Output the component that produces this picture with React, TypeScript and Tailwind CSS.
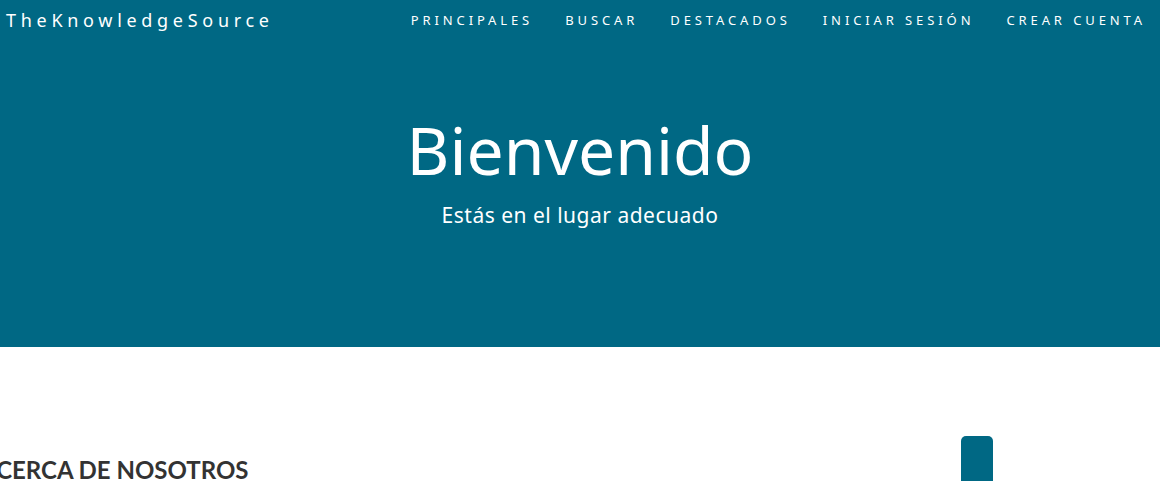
import React from "react";

const links = ["Principales", "Buscar", "Destacados", "Iniciar sesión", "Crear cuenta"];

export default function App() {
  return (
    <div className="min-h-screen bg-white overflow-hidden" style={{ fontFamily: "'Noto Sans', sans-serif" }}>
      <header className="bg-[#006884] h-[347px] flex flex-col">
        <nav className="flex items-center justify-between h-[41px] pl-[6px] pr-[14px]">
          <a className="text-white text-[18px] tracking-[4.7px]">TheKnowledgeSource</a>
          <ul className="flex gap-[32px]">
            {links.map((l) => (
              <li key={l} className="text-white text-[13px] uppercase tracking-[3.9px]">
                {l}
              </li>
            ))}
          </ul>
        </nav>
        <div className="flex flex-col items-center pt-[75px]">
          <h1 className="text-white text-[66px] leading-none">Bienvenido</h1>
          <p className="text-white text-[21px] tracking-[0.5px] mt-[18px]">Estás en el lugar adecuado</p>
        </div>
      </header>
      <section className="relative pt-[105px]">
        <h2 className="-ml-[20px] text-[#333] text-[24px] font-bold" style={{ fontFamily: "Lato, sans-serif" }}>
          ACERCA DE NOSOTROS
        </h2>
        <div className="absolute left-[961px] top-[89px] w-[32px] h-[60px] rounded-t-[5px] bg-[#006884]" />
      </section>
    </div>
  );
}
